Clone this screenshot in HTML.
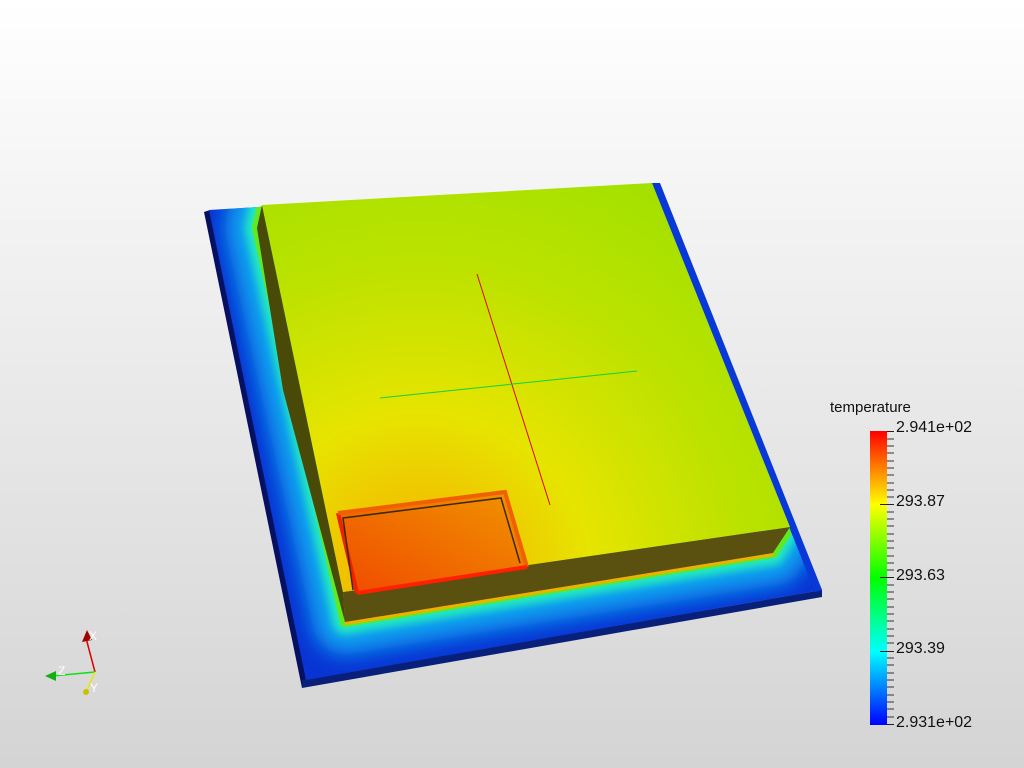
<!DOCTYPE html>
<html><head><style>
html,body{margin:0;padding:0}
body{width:1024px;height:768px;overflow:hidden;background:linear-gradient(#ffffff,#d4d4d4);font-family:"Liberation Sans",sans-serif;position:relative}
.t{position:absolute;font-size:16px;color:#111;white-space:nowrap}
</style></head><body>
<svg width="1024" height="768" style="position:absolute;left:0;top:0">
<defs>
<filter id="b1" x="-20%" y="-20%" width="140%" height="140%"><feGaussianBlur stdDeviation="10"/></filter>
<filter id="b2" x="-20%" y="-20%" width="140%" height="140%"><feGaussianBlur stdDeviation="4"/></filter>
<clipPath id="pc"><polygon points="209,210 657,183 822,590 306,680"/></clipPath>
<radialGradient id="tg" cx="420" cy="585" r="540" gradientUnits="userSpaceOnUse">
<stop offset="0" stop-color="#f0a000"/><stop offset="0.15" stop-color="#f0c400"/><stop offset="0.32" stop-color="#e6e400"/><stop offset="0.6" stop-color="#bce200"/><stop offset="1" stop-color="#94e000"/>
</radialGradient>
<linearGradient id="cg" x1="0" y1="1" x2="1" y2="0"><stop offset="0" stop-color="#f04a00"/><stop offset="1" stop-color="#f09400"/></linearGradient>
<linearGradient id="bar" x1="0" y1="0" x2="0" y2="1">
<stop offset="0" stop-color="#ff0000"/><stop offset="0.25" stop-color="#ffff00"/><stop offset="0.5" stop-color="#00ff00"/><stop offset="0.75" stop-color="#00ffff"/><stop offset="1" stop-color="#0000ff"/>
</linearGradient>
</defs>
<!-- plate -->
<polygon points="204,212 210,210 307,680 302,688" fill="#061060"/>
<polygon points="302,680 822,590 822,597 302,688" fill="#08207a"/>
<polygon points="209,210 657,183 822,590 306,680" fill="#0834d4"/>
<g clip-path="url(#pc)">
<polygon points="257,228 262,205 652,183 790,527 773,553 345,622" fill="none" stroke="#10a0f0" stroke-width="64" filter="url(#b1)" stroke-linejoin="round"/>
<polygon points="257,228 262,205 652,183 790,527 773,553 345,622" fill="none" stroke="#20e8c0" stroke-width="24" filter="url(#b2)" stroke-linejoin="round"/>
<polygon points="257,228 262,205 652,183 790,527 773,553 345,622" fill="none" stroke="#60e820" stroke-width="10" stroke-linejoin="round"/>
<polyline points="345,622 773,553" fill="none" stroke="#f0b000" stroke-width="6"/>
</g>
<polygon points="652,183 660,183 822,590 815,592" fill="#0838d8"/>
<!-- block -->
<polygon points="262,205 257,228 283,390 345,622 343,592" fill="#4a4a08"/>
<polygon points="343,592 790,527 773,553 345,622" fill="#5a5010"/>
<polygon points="262,205 652,183 790,527 343,592" fill="url(#tg)"/>
<!-- chip -->
<polygon points="338,513 505,492 527,567 357,593" fill="url(#cg)"/>
<polyline points="357,593 338,513" fill="none" stroke="#f02000" stroke-width="4"/>
<polyline points="338,513 505,492 527,567" fill="none" stroke="#f06000" stroke-width="4"/>
<polyline points="357,593 527,567" fill="none" stroke="#ff2000" stroke-width="4"/>
<polyline points="353,590 343,518 501,498 520,563" fill="none" stroke="#3a2a10" stroke-width="1.5"/>
<!-- cross -->
<line x1="477" y1="274" x2="550" y2="505" stroke="#e00020" stroke-width="1"/>
<line x1="380" y1="398" x2="637" y2="371" stroke="#10d040" stroke-width="1"/>
<!-- axes -->
<line x1="95" y1="672" x2="86" y2="638" stroke="#e00000" stroke-width="1.5"/>
<polygon points="82,642 87,630 92,640" fill="#a00000"/>
<line x1="95" y1="672" x2="52" y2="676" stroke="#10e010" stroke-width="1.5"/>
<polygon points="45,676 56,671 56,681" fill="#10b010"/>
<line x1="95" y1="672" x2="87" y2="690" stroke="#e8e800" stroke-width="1.5"/>
<circle cx="86" cy="692" r="3" fill="#c8c000"/>
<text x="89" y="640" font-size="12" fill="#fff" font-family="Liberation Sans">X</text>
<text x="58" y="675" font-size="12" fill="#fff" font-family="Liberation Sans">Z</text>
<text x="90" y="692" font-size="12" fill="#fff" font-family="Liberation Sans">Y</text>
<!-- scalar bar -->
<rect x="870" y="431" width="17" height="294" fill="url(#bar)"/>
<g stroke="#222" stroke-width="1">
<line x1="887" y1="431.5" x2="894" y2="431.5"/><line x1="887" y1="724.5" x2="894" y2="724.5"/>
<line x1="880" y1="504.5" x2="894" y2="504.5"/><line x1="880" y1="577.5" x2="894" y2="577.5"/><line x1="880" y1="651.5" x2="894" y2="651.5"/>
</g>
<g stroke="#333" stroke-width="1">
<path d="M887 439h7M887 446h7M887 453h7M887 461h7M887 468h7M887 475h7M887 483h7M887 490h7M887 497h7M887 512h7M887 519h7M887 526h7M887 534h7M887 541h7M887 548h7M887 556h7M887 563h7M887 570h7M887 585h7M887 592h7M887 599h7M887 607h7M887 614h7M887 621h7M887 629h7M887 636h7M887 643h7M887 658h7M887 665h7M887 673h7M887 680h7M887 687h7M887 695h7M887 702h7M887 709h7M887 717h7"/>
</g>
</svg>
<div class="t" style="left:830px;top:399px;font-size:15px">temperature</div>
<div class="t" style="left:896px;top:419px">2.941e+02</div>
<div class="t" style="left:896px;top:493px">293.87</div>
<div class="t" style="left:896px;top:567px">293.63</div>
<div class="t" style="left:896px;top:640px">293.39</div>
<div class="t" style="left:896px;top:714px">2.931e+02</div>
</body></html>
